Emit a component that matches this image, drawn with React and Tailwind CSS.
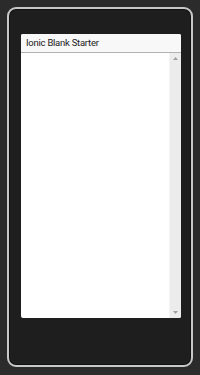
const App = () => {
  return (
    <div className="w-[200px] h-[375px] bg-[#2b2b2b] pt-[7px] pl-[7px] pr-[7px]">
      <div className="h-[360px] rounded-[9px] border-2 border-[#c8c8c8] bg-[#1e1e1e] shadow-[inset_0_0_0_1px_#111] pt-[25px] pl-[12px] pr-[10px]">
        <div className="h-[284px] w-[160px] rounded-[2px] bg-white flex flex-col overflow-hidden">
          <div className="h-[19px] shrink-0 bg-[#f8f8f8] border-b border-[#b2b2b2] flex items-center pl-[5px]">
            <span
              className="text-[9.5px] tracking-[-0.25px] text-[#222]"
              style={{ fontFamily: 'Roboto, "Noto Sans", sans-serif' }}
            >
              Ionic Blank Starter
            </span>
          </div>
          <div className="flex-1 flex">
            <div className="flex-1" />
            <div className="w-[12px] bg-[#ececec] border-l border-[#f4f4f4] flex flex-col items-center justify-between py-[4px]">
              <svg width="5" height="3" viewBox="0 0 5 3">
                <path d="M2.5 0 L5 3 L0 3 Z" fill="#a0a0a0" />
              </svg>
              <svg width="5" height="3" viewBox="0 0 5 3">
                <path d="M0 0 L5 0 L2.5 3 Z" fill="#a0a0a0" />
              </svg>
            </div>
          </div>
        </div>
      </div>
    </div>
  );
};

export default App;
